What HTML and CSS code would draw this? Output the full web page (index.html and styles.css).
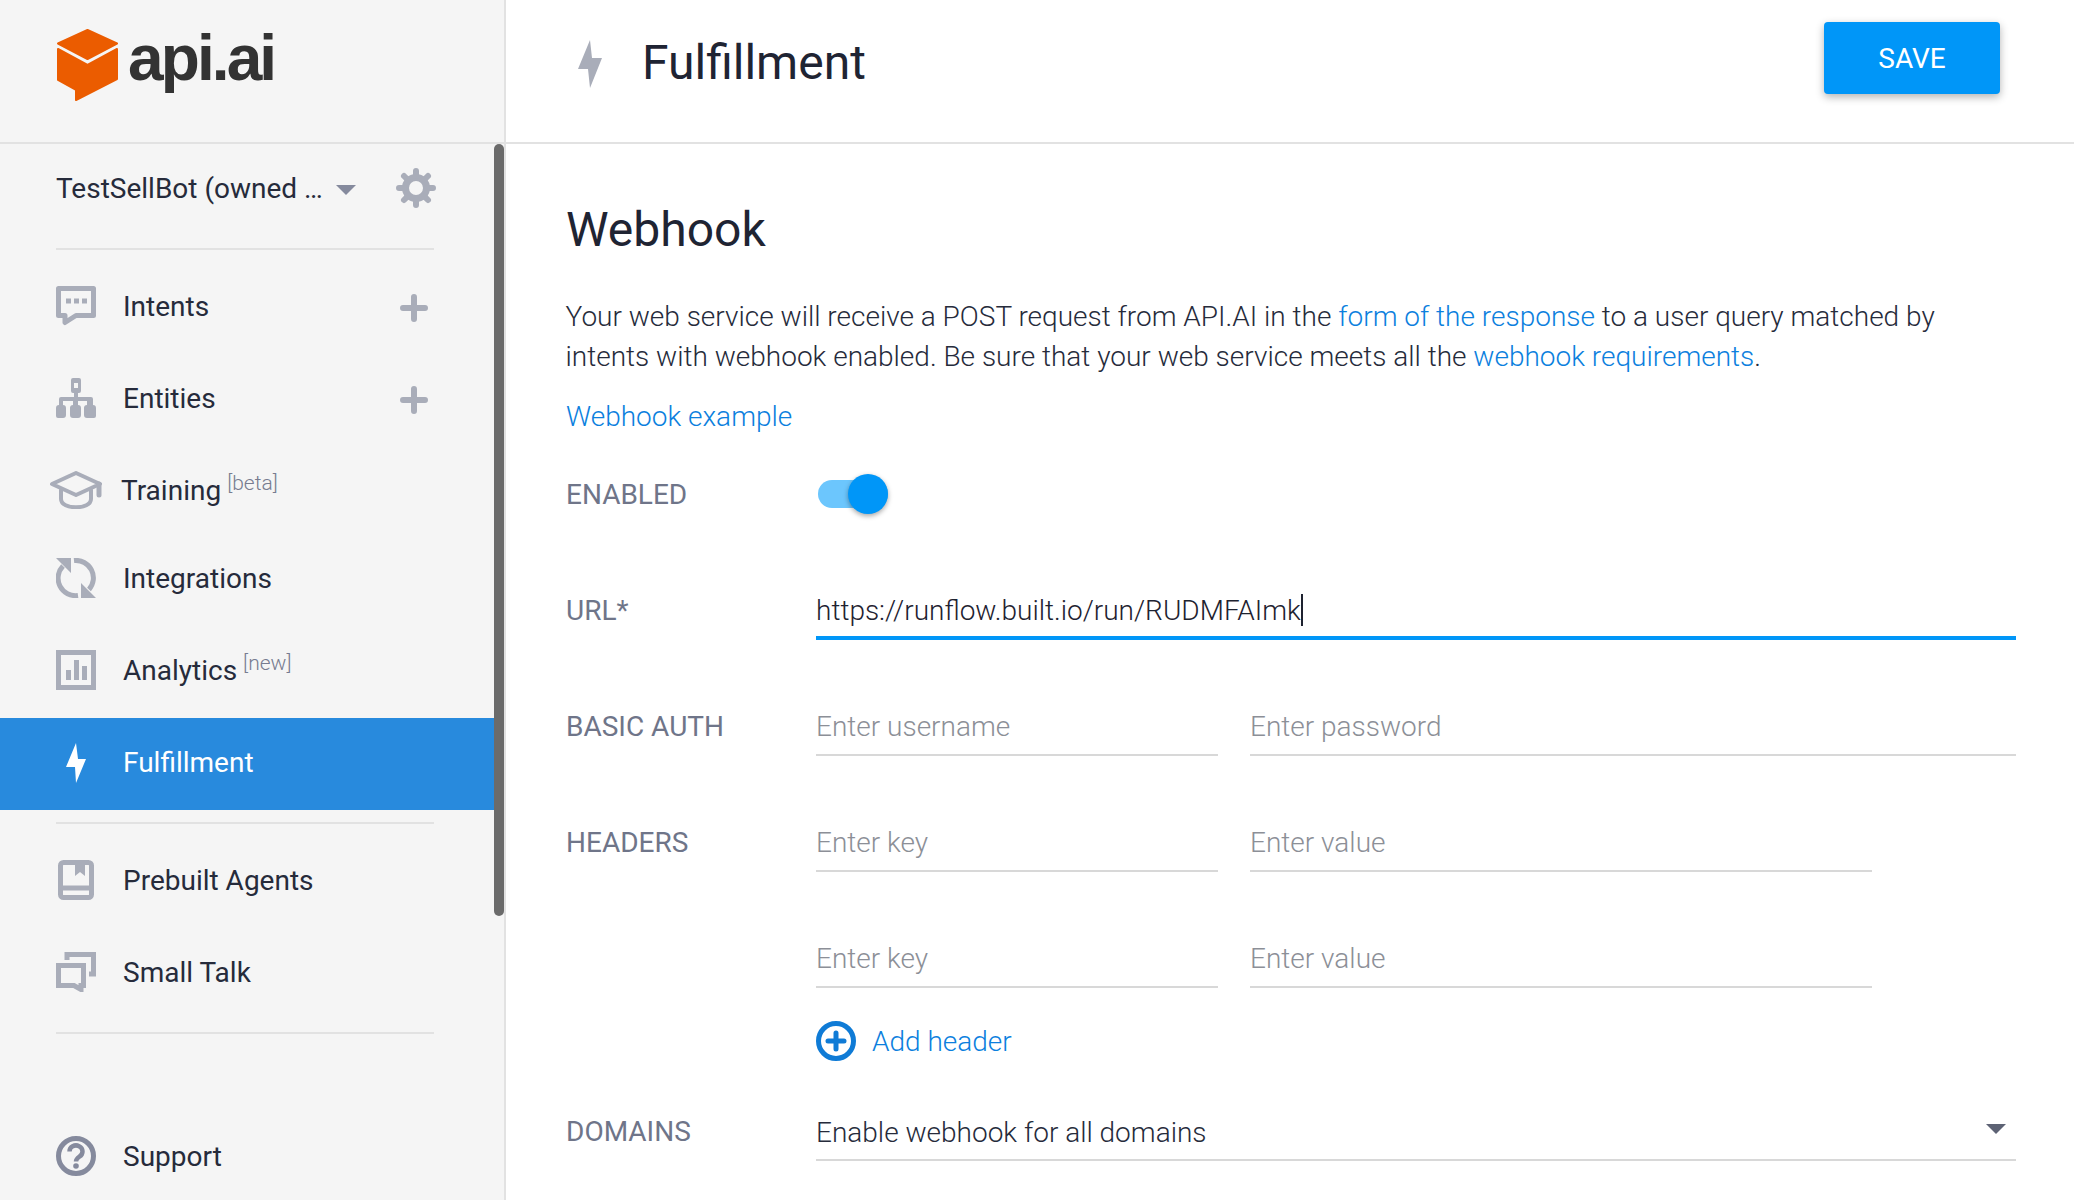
FILE: index.html
```html
<!DOCTYPE html>
<html lang="en">
<head>
    <meta charset="UTF-8">
    <meta name="viewport" content="width=device-width, initial-scale=1.0">
    <title>Fulfillment - api.ai</title>
    <link rel="stylesheet" href="styles.css">
</head>
<body>
    <div class="app">
        <aside class="sidebar">
            <div class="logo">
                <svg class="logo-cube" width="61" height="73" viewBox="0 0 61 73">
                    <path fill="#eb5c00" stroke="#eb5c00" stroke-width="2" stroke-linejoin="round" d="M30.5 1 60 14.5 30.5 30 1 14.5z"/>
                    <path fill="#eb5c00" stroke="#eb5c00" stroke-width="2" stroke-linejoin="round" d="M1 20 30.5 36 60 20V50L19 71V61L1 51z"/>
                </svg>
                <span class="logo-text">api.ai</span>
            </div>
            <div class="scrollbar"></div>
            <div class="side-scroll">
                <div class="account">
                    <span class="account-name">TestSellBot (owned …</span>
                    <svg class="account-caret" width="20" height="10" viewBox="0 0 20 10"><path fill="#858a9d" d="M0 0h20L10 10z"/></svg>
                    <svg class="gear" width="40" height="40" viewBox="0 0 40 40">
                        <circle cx="20" cy="20" r="10.5" fill="none" stroke="#a9adb9" stroke-width="7"/>
                        <g stroke="#a9adb9" stroke-width="6" stroke-linecap="round">
                            <path d="M20 3v5M20 32v5M3 20h5M32 20h5M8 8l3.5 3.5M28.500 28.500 32 32M32 8l-3.5 3.5M11.500 28.500 8 32"/>
                        </g>
                    </svg>
                </div>
                <hr class="side-line">
                <nav class="nav nav-first">
                    <a class="nav-item">
                        <svg class="nav-icon" width="40" height="40" viewBox="0 0 40 40">
                            <path fill="none" stroke="#a9adb9" stroke-width="5" stroke-linejoin="round" d="M2.500 2.500h35v27H20l-11 7v-7H2.500z"/>
                            <path stroke="#a9adb9" stroke-width="5" d="M10 15h5M18 15h5M26 15h5"/>
                        </svg>
                        <span>Intents</span>
                        <svg class="nav-plus" width="28" height="28" viewBox="0 0 28 28"><path stroke="#a9adb9" stroke-width="6" stroke-linecap="round" d="M14 3v22M3 14h22"/></svg>
                    </a>
                    <a class="nav-item">
                        <svg class="nav-icon" width="40" height="40" viewBox="0 0 40 40">
                            <path fill="#a9adb9" d="M15 2a2 2 0 0 1 2-2h6a2 2 0 0 1 2 2v11a2 2 0 0 1-2 2h-1v4h13a2 2 0 0 1 2 2v6a3 3 0 0 1 3 3v8a2 2 0 0 1-2 2h-7a3 3 0 0 1-3-3v-7a3 3 0 0 1 3-3v-4H22v4a3 3 0 0 1 3 3v7a3 3 0 0 1-3 3h-5a3 3 0 0 1-3-3v-7a3 3 0 0 1 3-3v-4H7v4a3 3 0 0 1 3 3v7a3 3 0 0 1-3 3H2a2 2 0 0 1-2-2v-8a3 3 0 0 1 3-3v-6a2 2 0 0 1 2-2h13v-4h-1a2 2 0 0 1-2-2z"/>
                            <rect x="18" y="5" width="4" height="5" fill="#f5f5f5"/>
                        </svg>
                        <span>Entities</span>
                        <svg class="nav-plus" width="28" height="28" viewBox="0 0 28 28"><path stroke="#a9adb9" stroke-width="6" stroke-linecap="round" d="M14 3v22M3 14h22"/></svg>
                    </a>
                    <a class="nav-item nav-item-short">
                        <svg class="nav-cap" width="52" height="38" viewBox="0 0 52 38">
                            <g fill="none" stroke="#a9adb9" stroke-width="4" stroke-linejoin="round" stroke-linecap="round">
                                <path d="M26 2 50 13 26 24 2 13z"/>
                                <path d="M11 19v9c0 11 30 11 30 0v-9"/>
                                <path stroke-width="5" d="M49 13v11"/>
                            </g>
                        </svg>
                        <span>Training</span><sup class="nav-tag nav-tag-beta">[beta]</sup>
                    </a>
                    <a class="nav-item">
                        <svg class="nav-icon" width="40" height="40" viewBox="0 0 40 40">
                            <g fill="none" stroke="#a9adb9" stroke-width="5">
                                <path d="M7 8A17.5 17.5 0 0 0 22 37.500"/>
                                <path d="M18 2.500A17.5 17.5 0 0 1 33 31.500"/>
                            </g>
                            <path fill="#a9adb9" d="M0 0h15v15zM40 40H25V25z"/>
                        </svg>
                        <span>Integrations</span>
                    </a>
                    <a class="nav-item">
                        <svg class="nav-icon" width="40" height="40" viewBox="0 0 40 40">
                            <rect x="2.500" y="2.500" width="35" height="35" fill="none" stroke="#a9adb9" stroke-width="5"/>
                            <path fill="#a9adb9" d="M10 20h5v10h-5zM18 10h5v20h-5zM26 16h5v14h-5z"/>
                        </svg>
                        <span>Analytics</span><sup class="nav-tag">[new]</sup>
                    </a>
                    <a class="nav-item nav-item-active">
                        <svg class="nav-icon" width="40" height="40" viewBox="0 0 40 40"><path fill="#fff" d="M20 0 10 24h9l1 16 10-24h-8z"/></svg>
                        <span>Fulfillment</span>
                    </a>
                </nav>
                <hr class="side-line">
                <nav class="nav">
                    <a class="nav-item">
                        <svg class="nav-icon" width="40" height="40" viewBox="0 0 40 40">
                            <rect x="4.500" y="2.500" width="31" height="35" rx="3" fill="none" stroke="#a9adb9" stroke-width="5"/>
                            <path stroke="#a9adb9" stroke-width="5" d="M5 28h30"/>
                            <path fill="#a9adb9" d="M19 3h10v13l-5-4-5 4z"/>
                        </svg>
                        <span>Prebuilt Agents</span>
                    </a>
                    <a class="nav-item">
                        <svg class="nav-icon" width="40" height="40" viewBox="0 0 40 40">
                            <path fill="none" stroke="#a9adb9" stroke-width="5" d="M2.500 13.500h25v20h-2.500v4l-7-4H2.500z"/>
                            <path fill="none" stroke="#a9adb9" stroke-width="5" d="M11 8V2.500h26.500V22H33"/>
                        </svg>
                        <span>Small Talk</span>
                    </a>
                </nav>
                <hr class="side-line side-line-last">
                <nav class="nav">
                    <a class="nav-item">
                        <svg class="nav-icon" width="40" height="40" viewBox="0 0 40 40">
                            <circle cx="20" cy="20" r="17.5" fill="none" stroke="#858a9d" stroke-width="5"/>
                            <path fill="none" stroke="#858a9d" stroke-width="4.500" d="M13.500 15.500a6.500 6 0 1 1 10 5c-2 1.500-3.500 2.500-3.500 5"/>
                            <circle cx="20" cy="30" r="2.800" fill="#858a9d"/>
                        </svg>
                        <span>Support</span>
                    </a>
                </nav>
            </div>
        </aside>

        <main class="main">
            <header class="topbar">
                <svg class="topbar-bolt" width="24" height="48" viewBox="0 0 24 48"><path fill="#a9adb9" d="M12 0 0 29h10l2 19 12-30H14z"/></svg>
                <span class="topbar-title">Fulfillment</span>
                <button class="save-btn">SAVE</button>
            </header>

            <section class="content">
                <h1>Webhook</h1>
                <p class="intro">Your web service will receive a POST request from API.AI in the <a href="#">form of the response</a> to a user query matched by intents with webhook enabled. Be sure that your web service meets all the <a href="#">webhook requirements</a>.</p>
                <p class="example"><a href="#">Webhook example</a></p>

                <div class="row row-toggle">
                    <label class="row-label">ENABLED</label>
                    <div class="toggle"><div class="toggle-thumb"></div></div>
                </div>
                <div class="row row-url">
                    <label class="row-label">URL*</label>
                    <div class="field field-focus"><span>https://runflow.built.io/run/RUDMFAImk</span><span class="caret"></span></div>
                </div>
                <div class="row">
                    <label class="row-label">BASIC AUTH</label>
                    <div class="fields">
                        <input class="input input-short" placeholder="Enter username">
                        <input class="input input-grow" placeholder="Enter password">
                    </div>
                </div>
                <div class="row">
                    <label class="row-label">HEADERS</label>
                    <div class="fields">
                        <input class="input input-short" placeholder="Enter key">
                        <input class="input input-value" placeholder="Enter value">
                    </div>
                </div>
                <div class="row">
                    <label class="row-label"></label>
                    <div class="fields">
                        <input class="input input-short" placeholder="Enter key">
                        <input class="input input-value" placeholder="Enter value">
                    </div>
                </div>
                <div class="add-row">
                    <svg width="40" height="40" viewBox="0 0 40 40">
                        <circle cx="20" cy="20" r="17.5" fill="none" stroke="#0f7bd6" stroke-width="5"/>
                        <path stroke="#0f7bd6" stroke-width="5" stroke-linecap="round" d="M20 12v16M12 20h16"/>
                    </svg>
                    <a href="#">Add header</a>
                </div>
                <div class="row row-domains">
                    <label class="row-label">DOMAINS</label>
                    <div class="field field-select">
                        <span>Enable webhook for all domains</span>
                        <svg class="select-caret" width="20" height="10" viewBox="0 0 20 10"><path fill="#5d6274" d="M0 0h20L10 10z"/></svg>
                    </div>
                </div>
            </section>
        </main>
    </div>
</body>
</html>
```
FILE: styles.css
```css
* {
    box-sizing: border-box;
}
html, body {
    margin: 0;
    height: 100%;
    overflow: hidden;
}
body {
    font-family: Roboto, sans-serif;
    font-size: 28px;
    color: #262b3b;
    background: #fff;
}
a {
    color: #0c7fde;
    text-decoration: none;
}
.app {
    display: flex;
    height: 1200px;
}

/* sidebar */
.sidebar {
    position: relative;
    flex: 0 0 506px;
    height: 1200px;
    overflow: hidden;
    background: #f5f5f5;
    border-right: 2px solid #e2e2e2;
}
.logo {
    display: flex;
    align-items: flex-start;
    height: 144px;
    padding: 29px 0 0 57px;
    border-bottom: 2px solid #e2e2e2;
}
.logo-text {
    margin: -9px 0 0 10px;
    font-family: "Liberation Sans", Arial, sans-serif;
    font-weight: 700;
    font-size: 64px;
    line-height: 76px;
    letter-spacing: -2.9px;
    color: #333;
}
.scrollbar {
    position: absolute;
    top: 144px;
    left: 494px;
    width: 10px;
    height: 772px;
    background: #6b6b6b;
    border-radius: 5px;
}
.side-scroll {
    width: 494px;
}
.account {
    display: flex;
    align-items: center;
    height: 104px;
    padding: 0 0 16px 56px;
}
.account-name {
    width: 280px;
    white-space: nowrap;
}
.account-caret {
    margin-top: 4px;
}
.gear {
    margin-left: 40px;
}
.side-line {
    height: 2px;
    margin: 0 60px 0 56px;
    border: 0;
    background: #e2e2e2;
}
.side-line-last {
    margin-bottom: 76px;
}
.nav {
    margin: 10px 0 14px;
}
.nav-first {
    margin-bottom: 12px;
}
.nav-item {
    display: flex;
    align-items: center;
    height: 92px;
    padding-left: 56px;
    color: #262b3b;
}
.nav-item-short {
    height: 88px;
    padding-top: 4px;
}
.nav-item-active {
    margin-top: 2px;
    padding-bottom: 3px;
    background: #288add;
    color: #fff;
}
.nav-icon {
    flex: none;
    margin-right: 27px;
}
.nav-cap {
    flex: none;
    margin: 0 19px 0 -6px;
}
.nav-plus {
    margin-left: auto;
    margin-right: 66px;
    position: relative;
    top: 2px;
}
.nav-tag {
    align-self: flex-start;
    margin: 25px 0 0 6px;
    font-size: 21px;
    font-weight: 300;
    line-height: 28px;
    color: #777c90;
}
.nav-tag-beta {
    margin-top: 21px;
}

/* main column */
.main {
    flex: 1;
    min-width: 0;
}
.topbar {
    display: flex;
    align-items: center;
    height: 144px;
    padding: 0 74px 18px 72px;
    border-bottom: 2px solid #e2e2e2;
}
.topbar-bolt {
    margin: 3px 40px 0 0;
}
.topbar-title {
    font-size: 48px;
    color: #1f2433;
}
.save-btn {
    width: 176px;
    height: 72px;
    margin-left: auto;
    margin-bottom: 8px;
    border: 0;
    border-radius: 4px;
    background: #0096f8;
    color: #fff;
    font-family: Roboto, sans-serif;
    font-size: 28px;
    box-shadow: 0 3px 8px rgba(0, 0, 0, 0.3);
}
.content {
    padding: 58px 58px 0 60px;
    font-weight: 300;
}
h1 {
    margin: 0 0 39px;
    font-size: 48px;
    font-weight: 400;
    line-height: 56px;
    color: #1f2433;
}
.intro {
    margin: 0 0 0 -0.5px;
    line-height: 40px;
}
.example {
    margin: 20px 0 0;
    line-height: 40px;
}
.row {
    display: flex;
    margin-top: 60px;
}
.row-toggle {
    align-items: center;
    height: 44px;
    margin-top: 35px;
}
.row-toggle .row-label {
    padding-top: 2px;
}
.row-url {
    margin-top: 68px;
}
.row-domains {
    margin-top: 44px;
}
.row-label {
    flex: 0 0 250px;
    font-weight: 400;
    line-height: 54px;
    color: #6f7589;
}
.toggle {
    position: relative;
    width: 70px;
    height: 28px;
    margin-left: 2px;
    border-radius: 14px;
    background: #6cc6fd;
}
.toggle-thumb {
    position: absolute;
    top: -6px;
    right: 0;
    width: 40px;
    height: 40px;
    border-radius: 50%;
    background: #0096f8;
    box-shadow: 0 2px 5px rgba(0, 0, 0, 0.35);
}
.field {
    display: flex;
    align-items: center;
    flex: 1;
    height: 56px;
    border-bottom: 2px solid #d8d8d8;
}
.field-focus {
    border-bottom: 4px solid #0096f8;
    color: #1e2230;
}
.caret {
    width: 2px;
    height: 32px;
    background: #1e2230;
}
.field-select {
    justify-content: space-between;
    padding-right: 10px;
}
.select-caret {
    margin-bottom: 6px;
}
.fields {
    display: flex;
    flex: 1;
    gap: 32px;
}
.input {
    height: 56px;
    padding: 0 0 2px;
    border: 0;
    border-bottom: 2px solid #d8d8d8;
    background: none;
    outline: none;
    font-family: Roboto, sans-serif;
    font-size: 28px;
    font-weight: 300;
}
.input::placeholder {
    color: #8c8f97;
    opacity: 1;
}
.input-short {
    flex: 0 0 402px;
    width: 402px;
}
.input-grow {
    flex: 1;
    min-width: 0;
}
.input-value {
    flex: 0 0 622px;
    width: 622px;
}
.add-row {
    display: flex;
    align-items: center;
    gap: 16px;
    height: 40px;
    margin: 33px 0 0 250px;
}
```
